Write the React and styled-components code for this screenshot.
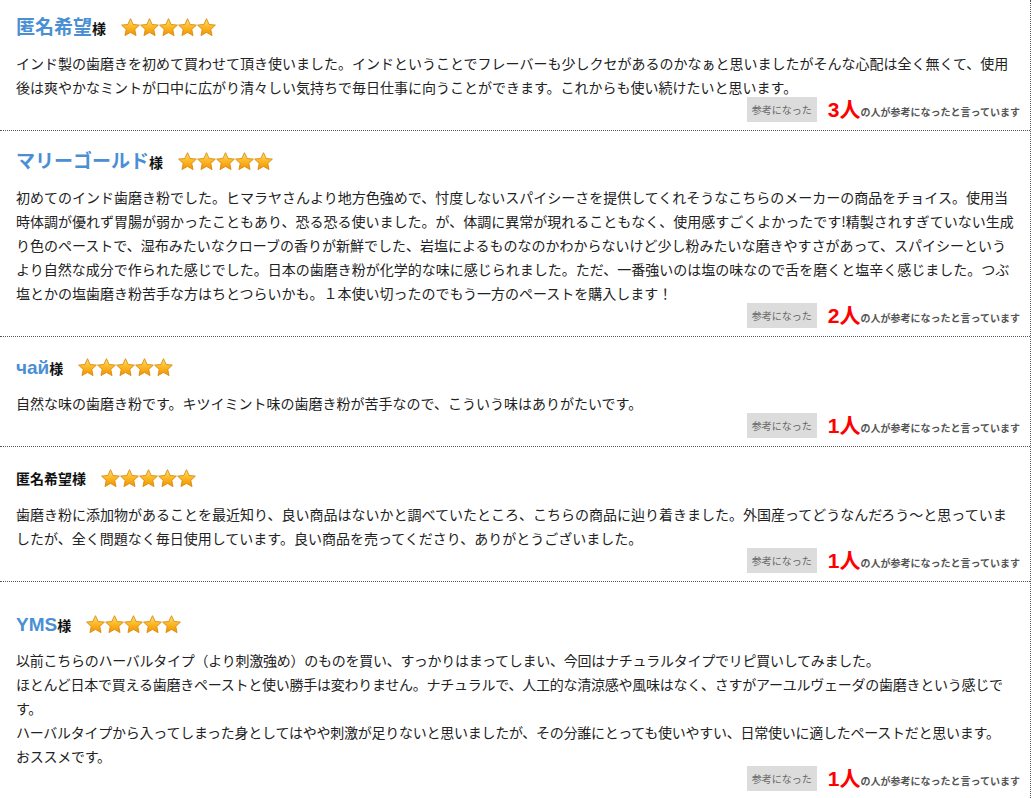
import React, { useId } from 'react'
import styled, { createGlobalStyle } from 'styled-components'

const GlobalStyle = createGlobalStyle`
  body {
    margin: 0;
    background: #fff;
    font-family: "Noto Sans CJK JP", "Liberation Sans", sans-serif;
  }
`

const reviews = [
  {
    name: '匿名希望',
    top: 15,
    helpful: 3,
    body: ['インド製の歯磨きを初めて買わせて頂き使いました。インドということでフレーバーも少しクセがあるのかなぁと思いましたがそんな心配は全く無くて、使用後は爽やかなミントが口中に広がり清々しい気持ちで毎日仕事に向うことができます。これからも使い続けたいと思います。'],
  },
  {
    name: 'マリーゴールド',
    top: 18,
    helpful: 2,
    body: ['初めてのインド歯磨き粉でした。ヒマラヤさんより地方色強めで、忖度しないスパイシーさを提供してくれそうなこちらのメーカーの商品をチョイス。使用当時体調が優れず胃腸が弱かったこともあり、恐る恐る使いました。が、体調に異常が現れることもなく、使用感すごくよかったです!精製されすぎていない生成り色のペーストで、湿布みたいなクローブの香りが新鮮でした、岩塩によるものなのかわからないけど少し粉みたいな磨きやすさがあって、スパイシーというより自然な成分で作られた感じでした。日本の歯磨き粉が化学的な味に感じられました。ただ、一番強いのは塩の味なので舌を磨くと塩辛く感じました。つぶ塩とかの塩歯磨き粉苦手な方はちとつらいかも。１本使い切ったのでもう一方のペーストを購入します！'],
  },
  {
    name: 'чай',
    top: 18,
    helpful: 1,
    body: ['自然な味の歯磨き粉です。キツイミント味の歯磨き粉が苦手なので、こういう味はありがたいです。'],
  },
  {
    name: '匿名希望',
    plain: true,
    top: 19,
    helpful: 1,
    body: ['歯磨き粉に添加物があることを最近知り、良い商品はないかと調べていたところ、こちらの商品に辿り着きました。外国産ってどうなんだろう～と思っていましたが、全く問題なく毎日使用しています。良い商品を売ってくださり、ありがとうございました。'],
  },
  {
    name: 'YMS',
    top: 30,
    helpful: 1,
    tight: true,
    body: [
      '以前こちらのハーバルタイプ（より刺激強め）のものを買い、すっかりはまってしまい、今回はナチュラルタイプでリピ買いしてみました。',
      'ほとんど日本で買える歯磨きペーストと使い勝手は変わりません。ナチュラルで、人工的な清涼感や風味はなく、さすがアーユルヴェーダの歯磨きという感じです。',
      'ハーバルタイプから入ってしまった身としてはやや刺激が足りないと思いましたが、その分誰にとっても使いやすい、日常使いに適したペーストだと思います。',
      'おススメです。',
    ],
  },
]

// five-point star, 19px cell
const STAR = 'M9.5 0.7 L12.15 6.5 L18.4 7.1 L13.78 11.39 L15.03 17.6 L9.5 14.4 L3.97 17.6 L5.22 11.39 L0.6 7.1 L6.85 6.5 Z'

function Stars() {
  const id = useId()
  return (
    <StarRow width="96" height="19" viewBox="0 0 96 19">
      <defs>
        <linearGradient id={id} x1="0" y1="0" x2="0" y2="1">
          <stop offset="0" stopColor="#ffe27a" />
          <stop offset="0.45" stopColor="#fdbb2a" />
          <stop offset="1" stopColor="#f29200" />
        </linearGradient>
      </defs>
      {[0, 1, 2, 3, 4].map(i => (
        <path
          key={i}
          d={STAR}
          transform={`translate(${i * 19},0)`}
          fill={`url(#${id})`}
          stroke="#d88a0c"
          strokeWidth="0.9"
          strokeLinejoin="round"
        />
      ))}
    </StarRow>
  )
}

export default function App() {
  return (
    <>
      <GlobalStyle />
      <List>
        {reviews.map((r, i) => (
          <Review key={i} $top={r.top}>
            <Head>
              <Reviewer>
                <Name $plain={r.plain}>{r.name}</Name>
                <Sama>様</Sama>
              </Reviewer>
              <Stars />
            </Head>
            <Body $tight={r.tight}>
              {r.body.map((line, j) => (
                <Line key={j}>{line}</Line>
              ))}
            </Body>
            <Footer>
              <HelpButton>参考になった</HelpButton>
              <Count>{r.helpful}人</Count>
              <Says>の人が参考になったと言っています</Says>
            </Footer>
          </Review>
        ))}
      </List>
    </>
  )
}

const List = styled.div`
  width: 1030px;
  min-height: 100vh;
  border-right: 1px dotted #555;
`

const Review = styled.div`
  padding: ${p => p.$top}px 10px 8px 16px;
  border-bottom: 1px dotted #555;
`

const Head = styled.div`
  display: flex;
  align-items: center;
  height: 24px;
`

const Reviewer = styled.span`
  line-height: 24px;
  font-weight: bold;
  white-space: nowrap;
`

const Name = styled.span`
  font-family: "Liberation Sans", "Noto Sans CJK JP", sans-serif;
  font-size: ${p => (p.$plain ? '14px' : '19px')};
  color: ${p => (p.$plain ? '#111' : '#4a8fd4')};
`

const Sama = styled.span`
  font-size: 14px;
  color: #111;
`

const StarRow = styled.svg`
  margin-left: 15px;
  display: block;
`

const Body = styled.div`
  margin-top: 12px;
  font-size: 14px;
  line-height: 24px;
  color: #222;
  letter-spacing: ${p => (p.$tight ? '-0.25px' : '0')};
`

const Line = styled.div``

const Footer = styled.div`
  display: flex;
  justify-content: flex-end;
  align-items: center;
  margin-top: -2px;
  height: 25px;
`

const HelpButton = styled.span`
  display: flex;
  align-items: center;
  justify-content: center;
  width: 70px;
  height: 25px;
  background: #dcdcdc;
  color: #666;
  font-size: 10px;
`

const Count = styled.span`
  margin-left: 11px;
  color: #ff0000;
  font-family: "Liberation Sans", "Noto Sans CJK JP", sans-serif;
  font-weight: bold;
  font-size: 21px;
  line-height: 25px;
`

const Says = styled.span`
  align-self: flex-end;
  margin-bottom: 3px;
  color: #555;
  font-weight: bold;
  font-size: 10px;
  line-height: 14px;
`
